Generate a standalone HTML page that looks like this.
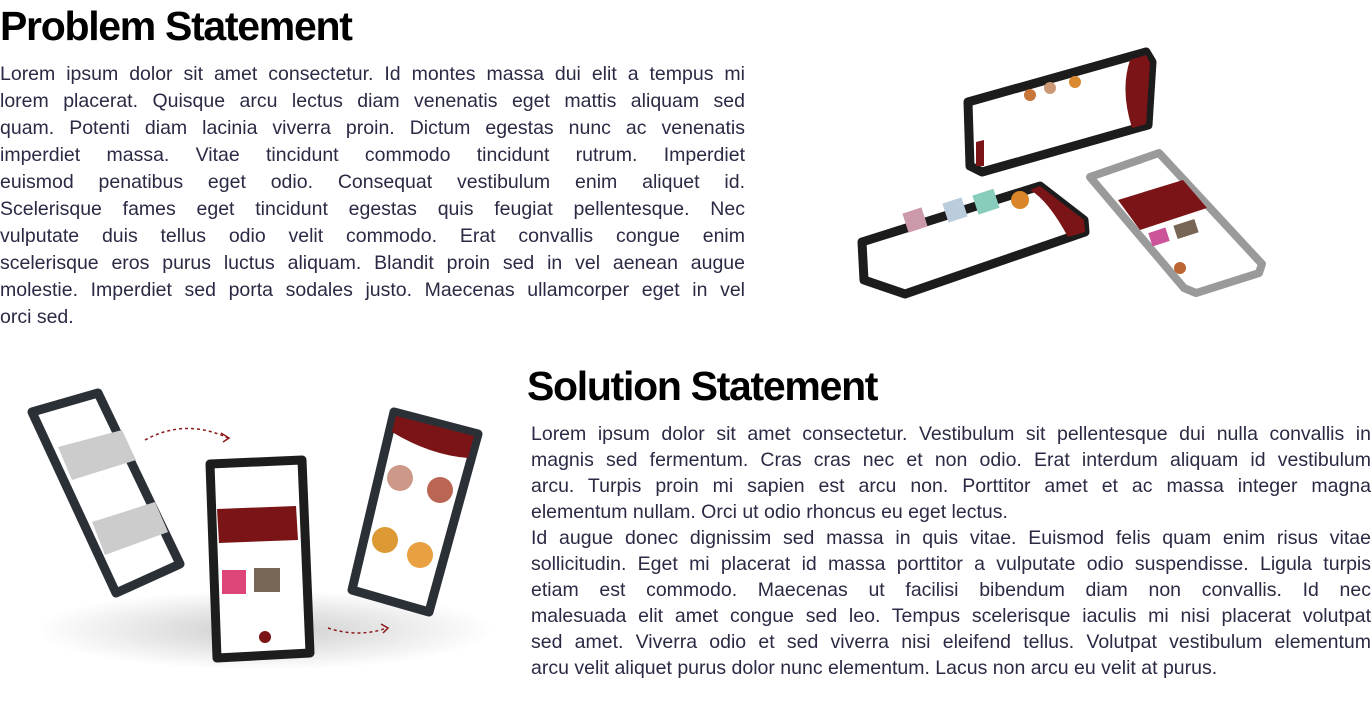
<!DOCTYPE html>
<html><head><meta charset="utf-8"><style>
*{margin:0;padding:0;box-sizing:border-box}
body{width:1372px;height:701px;background:#fff;position:relative;overflow:hidden;font-family:"Liberation Sans",sans-serif}
h1{position:absolute;font-size:41px;font-weight:bold;color:#000;letter-spacing:-1.3px;line-height:48px}
.p{position:absolute;color:#2a2a44;font-size:19.5px}
.p span{display:block;text-align:justify;text-align-last:justify;white-space:nowrap}
.p span.l{text-align-last:left}
svg{position:absolute;left:0;top:0}
</style></head><body>
<h1 style="left:0;top:2px">Problem Statement</h1>
<div class="p" style="left:0;top:61px;width:745px;line-height:27px">
<span>Lorem ipsum dolor sit amet consectetur. Id montes massa dui elit a tempus mi</span>
<span>lorem placerat. Quisque arcu lectus diam venenatis eget mattis aliquam sed</span>
<span>quam. Potenti diam lacinia viverra proin. Dictum egestas nunc ac venenatis</span>
<span>imperdiet massa. Vitae tincidunt commodo tincidunt rutrum. Imperdiet</span>
<span>euismod penatibus eget odio. Consequat vestibulum enim aliquet id.</span>
<span>Scelerisque fames eget tincidunt egestas quis feugiat pellentesque. Nec</span>
<span>vulputate duis tellus odio velit commodo. Erat convallis congue enim</span>
<span>scelerisque eros purus luctus aliquam. Blandit proin sed in vel aenean augue</span>
<span>molestie. Imperdiet sed porta sodales justo. Maecenas ullamcorper eget in vel</span>
<span class="l">orci sed.</span>
</div>
<h1 style="left:527px;top:362px">Solution Statement</h1>
<div class="p" style="left:531px;top:421px;width:840px;line-height:26px">
<span>Lorem ipsum dolor sit amet consectetur. Vestibulum sit pellentesque dui nulla convallis in</span>
<span>magnis sed fermentum. Cras cras nec et non odio. Erat interdum aliquam id vestibulum</span>
<span>arcu. Turpis proin mi sapien est arcu non. Porttitor amet et ac massa integer magna</span>
<span class="l">elementum nullam. Orci ut odio rhoncus eu eget lectus.</span>
<span>Id augue donec dignissim sed massa in quis vitae. Euismod felis quam enim risus vitae</span>
<span>sollicitudin. Eget mi placerat id massa porttitor a vulputate odio suspendisse. Ligula turpis</span>
<span>etiam est commodo. Maecenas ut facilisi bibendum diam non convallis. Id nec</span>
<span>malesuada elit amet congue sed leo. Tempus scelerisque iaculis mi nisi placerat volutpat</span>
<span>sed amet. Viverra odio et sed viverra nisi eleifend tellus. Volutpat vestibulum elementum</span>
<span class="l">arcu velit aliquet purus dolor nunc elementum. Lacus non arcu eu velit at purus.</span>
</div>

<svg width="1372" height="701" viewBox="0 0 1372 701">
<defs><radialGradient id="sh"><stop offset="0" stop-color="#000" stop-opacity=".2"/><stop offset="1" stop-color="#000" stop-opacity="0"/></radialGradient></defs>
<g stroke-linejoin="round">
<!-- top phone -->
<polygon points="968,102 1146,52 1152,62 1148,125 982,172 970,166" fill="#fff" stroke="#1c1c1c" stroke-width="9"/>
<path d="M1146,55 L1150,63 L1146,124 L1132,128 Q1120,90 1130,60 Z" fill="#7b1416"/>
<polygon points="976,142 984,140 984,166 976,166" fill="#7b1416"/>
<circle cx="1030" cy="95" r="6" fill="#c8753a"/><circle cx="1050" cy="88" r="6" fill="#c97"/><circle cx="1075" cy="82" r="6" fill="#d98a30"/>
<!-- bottom-left landscape -->
<polygon points="862,242 1040,186 1084,220 1085,232 905,294 864,280" fill="#fff" stroke="#1c1c1c" stroke-width="9"/>
<path d="M1040,186 L1084,220 L1085,232 L1068,237 Q1048,200 1030,190 Z" fill="#7b1416"/>
<rect x="905" y="210" width="20" height="20" fill="#c9a" transform="rotate(-18 915 220)"/>
<rect x="945" y="200" width="20" height="20" fill="#bcd" transform="rotate(-18 955 210)"/>
<rect x="975" y="192" width="22" height="20" fill="#8cb" transform="rotate(-18 985 202)"/>
<circle cx="1020" cy="200" r="9" fill="#d9852a"/>
<!-- right phone -->
<polygon points="1090,177 1159,153 1262,264 1259,273 1196,293 1184,288" fill="#fff" stroke="#9a9a9a" stroke-width="8"/>
<polygon points="1118,200 1183,180 1207,208 1140,230" fill="#7b1416"/>
<rect x="1150" y="230" width="18" height="14" fill="#c59" transform="rotate(-18 1159 237)"/>
<rect x="1175" y="222" width="22" height="14" fill="#765" transform="rotate(-18 1186 229)"/>
<circle cx="1180" cy="268" r="6" fill="#b63"/>

<!-- bottom-left group -->
<ellipse cx="265" cy="630" rx="230" ry="40" fill="url(#sh)"/>
<polygon points="32,412 98,393 180,564 116,593" fill="#fff" stroke="#2b2f36" stroke-width="9"/>
<polygon points="58,447 122,430 136,460 72,480" fill="#ccc"/>
<polygon points="92,522 155,502 168,532 105,555" fill="#ccc"/>
<polygon points="210,464 302,460 310,653 217,658" fill="#fff" stroke="#1d1d1d" stroke-width="9"/>
<polygon points="217,509 296,506 298,540 219,543" fill="#7b1416"/>
<rect x="222" y="570" width="24" height="24" fill="#d47"/>
<rect x="254" y="568" width="26" height="24" fill="#765"/>
<circle cx="265" cy="637" r="6" fill="#7b1416"/>
<polygon points="394,412 478,434 429,612 352,590" fill="#fff" stroke="#2b2f36" stroke-width="9"/>
<path d="M396,416 L474,436 L468,458 Q430,455 392,432 Z" fill="#7b1416"/>
<circle cx="400" cy="478" r="13" fill="#c98"/>
<circle cx="440" cy="490" r="13" fill="#b65"/>
<circle cx="385" cy="540" r="13" fill="#d93"/>
<circle cx="420" cy="555" r="13" fill="#e8a040"/>
</g>
<path d="M145 440 Q185 418 228 438" fill="none" stroke="#8b1a1a" stroke-width="1.5" stroke-dasharray="3 3"/><path d="M221 433 L229 438 L223 442" fill="none" stroke="#8b1a1a" stroke-width="1.5"/>
<path d="M328 628 Q358 638 387 628" fill="none" stroke="#8b1a1a" stroke-width="1.5" stroke-dasharray="3 3"/><path d="M381 624 L388 628 L383 633" fill="none" stroke="#8b1a1a" stroke-width="1.5"/>
</svg>
</body></html>
